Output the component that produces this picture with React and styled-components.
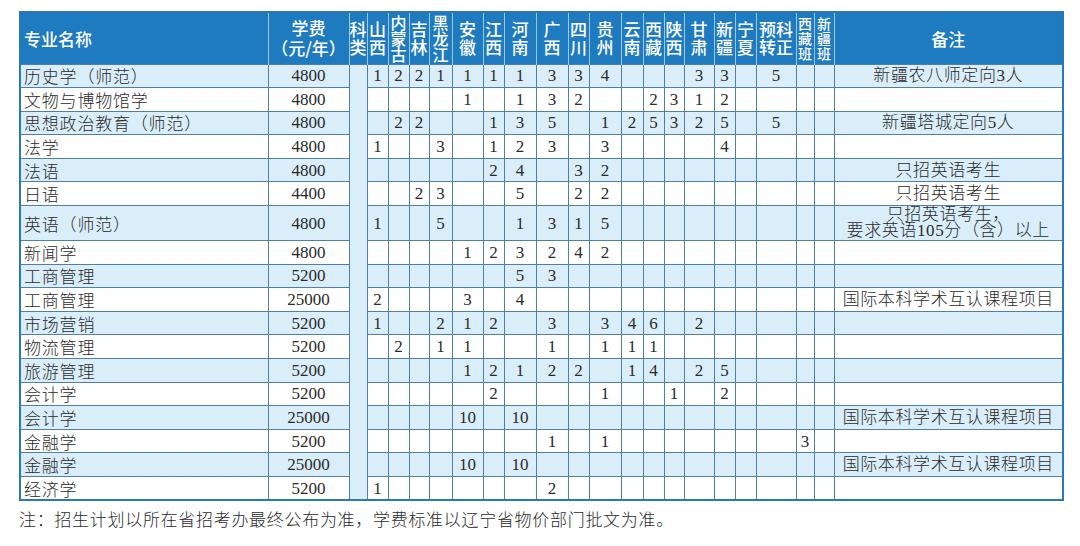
import styled, { createGlobalStyle } from 'styled-components';

const GlobalStyle = createGlobalStyle`
    body {
        margin: 0;
        background: #ffffff;
    }
`;

const Page = styled.div`
    padding: 11px 0 0 19px;
    font-family: "Liberation Serif", "Noto Sans CJK SC", serif;
    color: #2b2b2b;
`;

const Table = styled.table`
    width: 1043px;
    table-layout: fixed;
    border-collapse: collapse;
    border: 2px solid #2b78b6;
`;

const HeadCell = styled.th`
    background: #1f7bc0;
    color: #ffffff;
    font-family: "Noto Sans CJK SC", sans-serif;
    font-weight: 500;
    font-size: ${p => p.$fs || 17}px;
    text-align: ${p => p.$left ? 'left' : 'center'};
    padding: ${p => p.$left ? '0 0 0 3px' : '0'};
    border-left: 1px solid #9cc8e8;
    white-space: nowrap;
`;

const HeadLine = styled.span`
    display: block;
    line-height: ${p => p.$lh || 18}px;
    height: ${p => p.$lh || 18}px;
`;

const HeadRow = styled.tr`
    height: 52px;
`;

const Row = styled.tr`
    height: ${p => p.$tall ? '35px' : '23.6px'};
    background: ${p => p.$shade ? '#d9eef9' : '#ffffff'};
`;

const Cell = styled.td`
    border: 1px solid #4f7fa3;
    padding: 0;
    font-size: 17px;
    line-height: 17px;
    text-align: center;
    white-space: nowrap;
    overflow: hidden;
`;

const NameCell = styled(Cell)`
    text-align: left;
    padding-left: 3px;
    font-family: "Noto Sans CJK SC", serif;
    font-weight: 300;
    letter-spacing: 0.8px;
`;

const NoteCell = styled(Cell)`
    font-family: "Liberation Serif", "Noto Sans CJK SC", serif;
    font-weight: 300;
    letter-spacing: 0.6px;
`;

const NoteLine = styled.span`
    display: block;
    height: 16px;
    line-height: 16px;
`;

const KeleiCell = styled.td`
    background: #d9eef9;
    border: 1px solid #4f7fa3;
    padding: 0;
`;

const Footnote = styled.p`
    margin: 8px 0 0 0;
    font-family: "Noto Sans CJK SC", serif;
    font-weight: 300;
    font-size: 17px;
    line-height: 20px;
    letter-spacing: 0.7px;
    color: #2b2b2b;
`;

const widths = [248, 81, 18, 21, 21, 20, 23, 31, 21, 32, 32, 21, 32, 22, 21, 20, 30, 21, 21, 40, 18, 20, 229];

const provinces = [
    { lines: ['山', '西'] },
    { lines: ['内', '蒙', '古'], lh: 16, fs: 16 },
    { lines: ['吉', '林'] },
    { lines: ['黑', '龙', '江'], lh: 16, fs: 16 },
    { lines: ['安', '徽'] },
    { lines: ['江', '西'] },
    { lines: ['河', '南'] },
    { lines: ['广', '西'] },
    { lines: ['四', '川'] },
    { lines: ['贵', '州'] },
    { lines: ['云', '南'] },
    { lines: ['西', '藏'] },
    { lines: ['陕', '西'] },
    { lines: ['甘', '肃'] },
    { lines: ['新', '疆'] },
    { lines: ['宁', '夏'] },
    { lines: ['预科', '转正'] },
    { lines: ['西', '藏', '班'], lh: 15, fs: 14 },
    { lines: ['新', '疆', '班'], lh: 15, fs: 14 },
];

// 列顺序: 山西 内蒙古 吉林 黑龙江 安徽 江西 河南 广西 四川 贵州 云南 西藏 陕西 甘肃 新疆 宁夏 预科转正 西藏班 新疆班
const rows = [
    ['历史学（师范）', '4800', [1, 2, 2, 1, 1, 1, 1, 3, 3, 4, '', '', '', 3, 3, '', 5, '', ''], '新疆农八师定向3人'],
    ['文物与博物馆学', '4800', ['', '', '', '', 1, '', 1, 3, 2, '', '', 2, 3, 1, 2, '', '', '', ''], ''],
    ['思想政治教育（师范）', '4800', ['', 2, 2, '', '', 1, 3, 5, '', 1, 2, 5, 3, 2, 5, '', 5, '', ''], '新疆塔城定向5人'],
    ['法学', '4800', [1, '', '', 3, '', 1, 2, 3, '', 3, '', '', '', '', 4, '', '', '', ''], ''],
    ['法语', '4800', ['', '', '', '', '', 2, 4, '', 3, 2, '', '', '', '', '', '', '', '', ''], '只招英语考生'],
    ['日语', '4400', ['', '', 2, 3, '', '', 5, '', 2, 2, '', '', '', '', '', '', '', '', ''], '只招英语考生'],
    ['英语（师范）', '4800', [1, '', '', 5, '', '', 1, 3, 1, 5, '', '', '', '', '', '', '', '', ''], ['只招英语考生，', '要求英语105分（含）以上']],
    ['新闻学', '4800', ['', '', '', '', 1, 2, 3, 2, 4, 2, '', '', '', '', '', '', '', '', ''], ''],
    ['工商管理', '5200', ['', '', '', '', '', '', 5, 3, '', '', '', '', '', '', '', '', '', '', ''], ''],
    ['工商管理', '25000', [2, '', '', '', 3, '', 4, '', '', '', '', '', '', '', '', '', '', '', ''], '国际本科学术互认课程项目'],
    ['市场营销', '5200', [1, '', '', 2, 1, 2, '', 3, '', 3, 4, 6, '', 2, '', '', '', '', ''], ''],
    ['物流管理', '5200', ['', 2, '', 1, 1, '', '', 1, '', 1, 1, 1, '', '', '', '', '', '', ''], ''],
    ['旅游管理', '5200', ['', '', '', '', 1, 2, 1, 2, 2, '', 1, 4, '', 2, 5, '', '', '', ''], ''],
    ['会计学', '5200', ['', '', '', '', '', 2, '', '', '', 1, '', '', 1, '', 2, '', '', '', ''], ''],
    ['会计学', '25000', ['', '', '', '', 10, '', 10, '', '', '', '', '', '', '', '', '', '', '', ''], '国际本科学术互认课程项目'],
    ['金融学', '5200', ['', '', '', '', '', '', '', 1, '', 1, '', '', '', '', '', '', '', 3, ''], ''],
    ['金融学', '25000', ['', '', '', '', 10, '', 10, '', '', '', '', '', '', '', '', '', '', '', ''], '国际本科学术互认课程项目'],
    ['经济学', '5200', [1, '', '', '', '', '', '', 2, '', '', '', '', '', '', '', '', '', '', ''], ''],
];

function App() {
    return (
        <Page>
            <GlobalStyle />
            <Table>
                <colgroup>
                    {widths.map((w, i) => <col key={i} style={{ width: w }} />)}
                </colgroup>
                <thead>
                    <HeadRow>
                        <HeadCell $left>专业名称</HeadCell>
                        <HeadCell>
                            <HeadLine $lh={20}>学费</HeadLine>
                            <HeadLine $lh={20}>（元/年）</HeadLine>
                        </HeadCell>
                        <HeadCell>
                            <HeadLine>科</HeadLine>
                            <HeadLine>类</HeadLine>
                        </HeadCell>
                        {provinces.map((p, i) => (
                            <HeadCell key={i} $fs={p.fs}>
                                {p.lines.map((l, j) => <HeadLine key={j} $lh={p.lh}>{l}</HeadLine>)}
                            </HeadCell>
                        ))}
                        <HeadCell>备注</HeadCell>
                    </HeadRow>
                </thead>
                <tbody>
                    {rows.map(([name, fee, nums, note], i) => {
                        const tall = Array.isArray(note);
                        return (
                            <Row key={i} $shade={i % 2 === 0} $tall={tall}>
                                <NameCell>{name}</NameCell>
                                <Cell>{fee}</Cell>
                                {i === 0 && <KeleiCell rowSpan={rows.length} />}
                                {nums.map((n, j) => <Cell key={j}>{n}</Cell>)}
                                <NoteCell>
                                    {tall ? note.map((l, j) => <NoteLine key={j}>{l}</NoteLine>) : note}
                                </NoteCell>
                            </Row>
                        );
                    })}
                </tbody>
            </Table>
            <Footnote>注：招生计划以所在省招考办最终公布为准，学费标准以辽宁省物价部门批文为准。</Footnote>
        </Page>
    );
}

export default App;
